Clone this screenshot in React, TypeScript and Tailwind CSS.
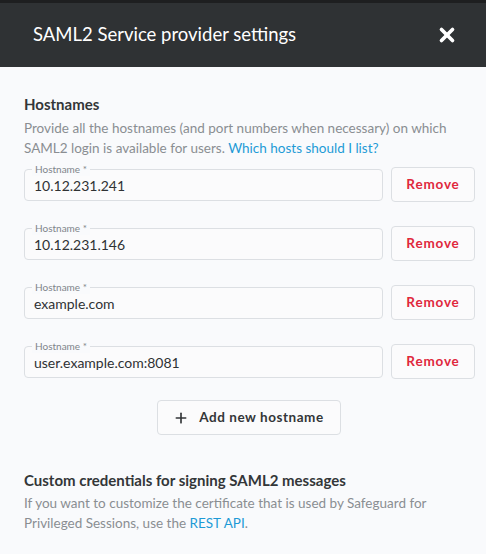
import { Plus, X } from "lucide-react";

const hosts = ["10.12.231.241", "10.12.231.146", "example.com", "user.example.com:8081"];

function HostRow({ value }: { value: string }) {
  return (
    <div className="flex items-start gap-2">
      <div className="relative mt-[2px] h-8 flex-1 rounded border border-[#dcdfe3] bg-[#fbfbfc]">
        <span className="absolute -top-[8px] left-[7px] bg-[#f9fafc] px-[3px] text-[10px] leading-[14px] text-[#80858a]">
          Hostname *
        </span>
        <div className="flex h-full items-center px-[9px] pt-[1px] text-[14px] text-[#2f3234]">
          {value}
        </div>
      </div>
      <button className="h-[35px] w-[84px] rounded border border-[#dcdfe3] bg-[#fbfbfc] text-[13.5px] font-bold tracking-[0.06em] text-[#e0283c]">
        Remove
      </button>
    </div>
  );
}

export default function App() {
  return (
    <div className="h-[554px] w-[486px] overflow-hidden bg-[#f9fafc] font-['Lato',sans-serif]">
      <div className="h-[3px] bg-[#1e1f20]" />
      <div className="flex h-[64px] items-center justify-between bg-[#2f3234] pl-[33px] pr-[28px]">
        <h1 className="text-[18.5px] text-white">SAML2 Service provider settings</h1>
        <X size={22} strokeWidth={4} className="text-white" />
      </div>

      <div className="pl-6 pr-[11px] pt-[27px]">
        <h2 className="text-[15px] font-bold leading-[20px] text-[#333638]">Hostnames</h2>
        <p className="mt-[4px] pr-[13px] text-[13.5px] leading-[20px] text-[#8a8e92]">
          Provide all the hostnames (and port numbers when necessary) on which SAML2 login is
          available for users. <span className="text-[#1e9ad6]">Which hosts should I list?</span>
        </p>

        <div className="mt-[9px] flex flex-col gap-[24px]">
          {hosts.map((h) => (
            <HostRow key={h} value={h} />
          ))}
        </div>

        <div className="mt-[21px] flex justify-center pr-[2px]">
          <button className="flex h-[35px] w-[184px] items-center justify-center gap-[10px] rounded border border-[#dcdfe3] bg-[#fbfbfc] text-[13.5px] font-bold tracking-[0.04em] text-[#333638]">
            <Plus size={16} strokeWidth={2.5} />
            Add new hostname
          </button>
        </div>

        <h2 className="mt-[35px] text-[15px] font-bold leading-[20px] text-[#333638]">
          Custom credentials for signing SAML2 messages
        </h2>
        <p className="mt-[3px] pr-[13px] text-[13.5px] leading-[20px] text-[#8a8e92]">
          If you want to customize the certificate that is used by Safeguard for Privileged
          Sessions, use the <span className="text-[#1e9ad6]">REST API</span>.
        </p>
      </div>
    </div>
  );
}
